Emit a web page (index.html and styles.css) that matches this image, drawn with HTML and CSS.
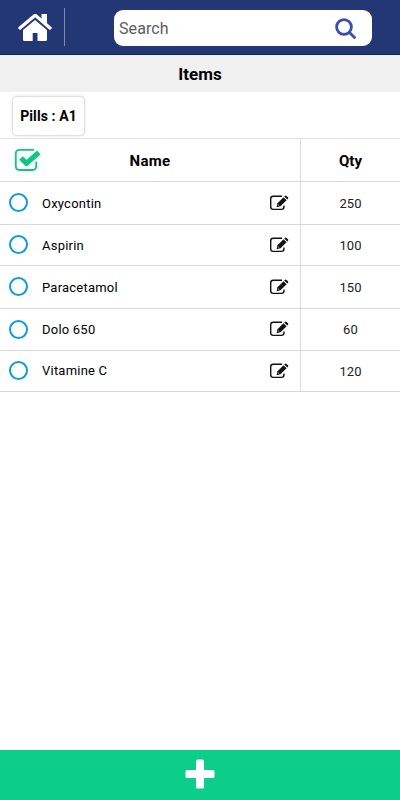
FILE: index.html
```html
<!DOCTYPE html>
<html lang="en">
<head>
<meta charset="utf-8">
<title>Items</title>
<link rel="stylesheet" href="styles.css">
</head>
<body>
<svg class="defs" aria-hidden="true">
  <symbol id="edit" viewBox="0 0 20 16">
    <path d="M13 1.300H4.200Q1.700 1.300 1.700 3.900V11.800Q1.700 14.400 4.200 14.400H12.400Q15 14.400 15 11.800V10.500" fill="none" stroke="#111" stroke-width="1.400"/>
    <path d="M7.600 12.200L8.500 8.200L14.500 2.200L17.600 5.200L11.500 11.300Z" fill="#111"/>
    <path d="M15.200 1.600L16.100 .8Q16.800 .3 17.500 .9L19 2.300Q19.600 3 19 3.700L18.300 4.500Z" fill="#111"/>
    <path d="M8.900 9.500L10.300 10.900" stroke="#fff" stroke-width=".7"/>
  </symbol>
</svg>
<header class="topbar">
  <svg class="home" viewBox="0 0 34 28">
    <path d="M17 6L29 16V25.500Q29 27 27.500 27H19.500V19H14.700V27H6.500Q5 27 5 25.500V16Z" fill="#fff"/>
    <path d="M1.700 14.200L15.800 2Q17.200 .8 18.600 2L32.300 14.200" fill="none" stroke="#233774" stroke-width="6"/>
    <path d="M23.500 0H29V11L23.500 6.500Z" fill="#fff"/>
    <path d="M2 14L16 2.200Q17.200 1.200 18.400 2.200L32 14" fill="none" stroke="#fff" stroke-width="3.400" stroke-linecap="round"/>
  </svg>
  <span class="divider"></span>
  <div class="search">
    <span class="hint">Search</span>
    <svg class="lens" viewBox="0 0 22 22"><circle cx="9" cy="9" r="7.400"/><path d="M14.500 14.500L19.500 19.400"/></svg>
  </div>
</header>
<h1 class="title">Items</h1>
<div class="filter"><span class="chip">Pills : A1</span></div>
<main class="table">
  <div class="row head">
    <div class="name">
      <svg class="check" viewBox="0 0 28 24">
        <path d="M20 1.800H5.500Q1.800 1.800 1.800 5.500V18.300Q1.800 22 5.500 22H18.500Q22.200 22 22.200 18.300V13.500" fill="none" stroke="#0bc883" stroke-width="1.800"/>
        <path d="M7 10L12.500 15.400L24.800 4.500" fill="none" stroke="#0bc883" stroke-width="5.200" stroke-linejoin="round"/>
      </svg>
      <span class="label">Name</span>
    </div>
    <div class="qty">Qty</div>
  </div>
  <div class="row"><div class="name"><i class="radio"></i><span class="item">Oxycontin</span><svg class="edit"><use href="#edit"/></svg></div><div class="qty">250</div></div>
  <div class="row short"><div class="name"><i class="radio"></i><span class="item">Aspirin</span><svg class="edit"><use href="#edit"/></svg></div><div class="qty">100</div></div>
  <div class="row"><div class="name"><i class="radio"></i><span class="item">Paracetamol</span><svg class="edit"><use href="#edit"/></svg></div><div class="qty">150</div></div>
  <div class="row mid"><div class="name"><i class="radio"></i><span>Dolo 650</span><svg class="edit"><use href="#edit"/></svg></div><div class="qty">60</div></div>
  <div class="row short"><div class="name"><i class="radio"></i><span>Vitamine C</span><svg class="edit"><use href="#edit"/></svg></div><div class="qty">120</div></div>
</main>
<footer class="add"><svg viewBox="0 0 30 30"><path d="M11 2Q11 .5 12.500 .5H17.500Q19 .5 19 2V11H28Q29.500 11 29.500 12.500V17.500Q29.500 19 28 19H19V28Q19 29.500 17.500 29.500H12.500Q11 29.500 11 28V19H2Q.5 19 .5 17.500V12.500Q.5 11 2 11H11Z" fill="#fff"/></svg></footer>
</body>
</html>
```
FILE: styles.css
```css
* { box-sizing: border-box; }
body {
  margin: 0;
  height: 800px;
  display: flex;
  flex-direction: column;
  background: #fff;
  color: #000;
  font-family: Roboto, sans-serif;
  overflow: hidden;
}
svg { display: block; flex: none; }
.defs { position: absolute; width: 0; height: 0; }
.topbar {
  height: 55px;
  flex: none;
  display: flex;
  align-items: center;
  padding: 0 28px 0 18px;
  background: #233774;
  border-bottom: 1px solid #0c2465;
}
.home { width: 34px; height: 28px; margin-top: 2px; }
.divider { width: 1px; height: 38px; margin-left: 12px; background: #7f8bb5; }
.search {
  width: 258px;
  height: 36px;
  margin: 1px 0 0 auto;
  padding: 0 15px 0 5px;
  display: flex;
  align-items: center;
  justify-content: space-between;
  border-radius: 9px;
  background: #fff;
  color: #5c5c5c;
  font-size: 16px;
}
.hint { padding-top: 2px; letter-spacing: .1px; }
.lens { width: 22px; height: 22px; margin-top: 2px; fill: none; stroke: #3b4db0; stroke-width: 2.8; stroke-linecap: round; }
.title {
  height: 37px;
  flex: none;
  margin: 0;
  padding-top: 1px;
  background: #f0f0f0;
  font-size: 17px;
  font-weight: 700;
  line-height: 37px;
  text-align: center;
}
.filter { height: 47px; flex: none; padding: 5px 13px; border-bottom: 1px solid #e2e2e2; }
.chip {
  display: block;
  width: 71px;
  height: 38px;
  border-radius: 4px;
  box-shadow: 0 0 3px rgba(0, 0, 0, .35);
  font-size: 14px;
  font-weight: 700;
  letter-spacing: .1px;
  line-height: 38px;
  text-align: center;
}
.row { display: flex; height: 43px; border-bottom: 1px solid #d8d8d8; font-size: 13px; }
.row.short { height: 41px; }
.row.mid { height: 42px; }
.name { width: 301px; display: flex; align-items: center; padding-left: 9px; padding-bottom: 1px; border-right: 1px solid #dcdcdc; letter-spacing: .22px; }
.item { padding-top: 1px; }
.qty { flex: 1; display: flex; align-items: center; justify-content: center; color: #222; letter-spacing: .1px; }
.head { font-size: 15px; font-weight: 700; }
.head .name { padding: 0 42px 0 14px; letter-spacing: .3px; }
.head .qty { padding-top: 2px; color: #000; letter-spacing: 0; }
.check { width: 28px; height: 24px; margin-top: -1px; }
.label { flex: 1; padding-top: 2px; text-align: center; }
.radio { width: 19px; height: 19px; margin-right: 14px; border: 2px solid #109bdb; border-radius: 50%; }
.edit { width: 20px; height: 16px; margin: 0 11px 0 auto; }
.add { height: 50px; flex: none; margin-top: auto; display: flex; justify-content: center; padding-top: 9px; background: #0ccd8a; }
.add svg { width: 30px; height: 30px; }
```
